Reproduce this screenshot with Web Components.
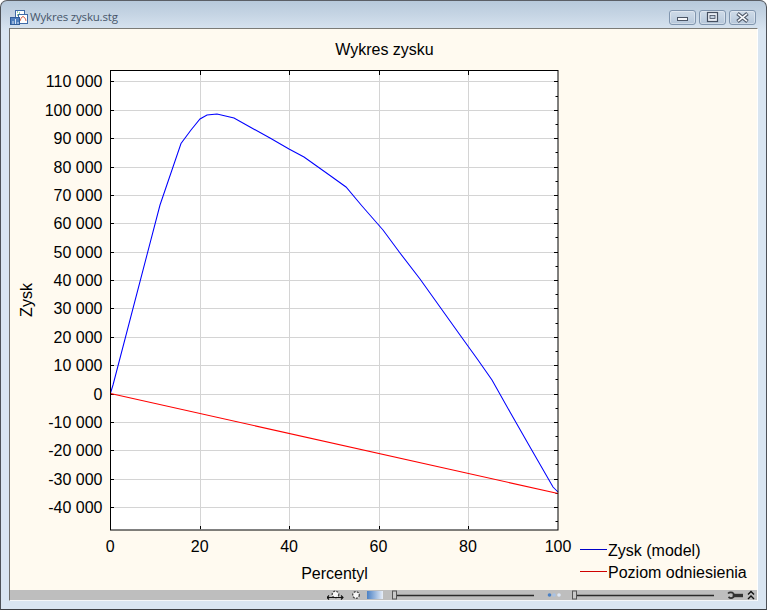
<!DOCTYPE html>
<html lang="pl"><head><meta charset="utf-8"><title>Wykres zysku.stg</title>
<style>html,body{margin:0;padding:0;background:#fff}body{width:767px;height:610px;overflow:hidden}</style>
</head><body>
<app-window caption="Wykres zysku.stg">
  <profit-chart></profit-chart>
  <chart-statusbar></chart-statusbar>
</app-window>
<script>
class CaptionButton extends HTMLElement{
  constructor(){super();const k=this.getAttribute('kind');
    const g={min:'<rect x="8.500" y="7.500" width="10" height="3" fill="#f4f6f9" stroke="#4c5666"/>',
      max:'<rect x="8.500" y="2.500" width="10" height="9" fill="#e9eef5" stroke="#454f60" stroke-width="1.200"/><rect x="11" y="5.500" width="5" height="3" fill="#c3d0df" stroke="#454f60" stroke-width=".8"/>',
      close:'<path d="M8.500 3.500l10 8M18.500 3.500l-10 8" stroke="#4c5666" stroke-width="3.800" fill="none"/><path d="M9 3.800l9 7.400M18 3.800l-9 7.400" stroke="#f6f8fb" stroke-width="1.700" fill="none"/>'}[k];
    this.attachShadow({mode:'open'}).innerHTML=`<style>:host{display:block;width:27px;height:15px;box-sizing:border-box;border:1px solid #8095ae;border-radius:3px;background:linear-gradient(#cfdbe8,#c3d2e2 50%,#b6c7da);box-shadow:inset 0 0 0 1px rgba(255,255,255,.35)}svg{display:block;margin:-1px}</style><svg width="27" height="15" viewBox="0 0 27 15">${g}</svg>`;}
}
customElements.define('caption-button',CaptionButton);

class AppWindow extends HTMLElement{
  constructor(){super();
    this.attachShadow({mode:'open'}).innerHTML=`<style>
    :host{display:block;width:767px;height:610px;box-sizing:border-box;border:1px solid #4d5157;border-bottom-color:#3d4044;border-top-color:#5b5f66;border-radius:7px 7px 0 0;background:linear-gradient(#b7c9db 0,#c6d5e4 14px,#d9e5f1 30px,#d9e5f1 100%);overflow:hidden;padding:0 8px 8px 8px}
    .bar{display:flex;align-items:flex-start;height:27px;box-sizing:border-box;margin-left:-8px;margin-right:-8px;padding:0 8px}
    svg.ic{display:block;margin:8px 0 0 1px;flex:none}
    .t{font:11.500px/15px "Open Sans","Noto Sans",sans-serif;color:#47566a;margin:8px 0 0 2px;flex:1;letter-spacing:-.18px}
    .btns{display:flex;gap:3px;margin:9px 2px 0 0}
    .client{box-sizing:border-box;width:749px;height:573px;border-top:1px solid #7b7b76;border-left:1px solid #6f6f6c;border-bottom:1px solid #f4f6f8;border-right:1px solid #fff;background:#fffaf0}
    </style>
    <div class="bar">
      <svg class="ic" width="18" height="17" viewBox="0 0 18 17">
        <rect x="5.500" y="1.500" width="9" height="9" fill="#fff" stroke="#3f6ba8"/><path d="M7 3h1M9 4h1M7 6h1" stroke="#2f9a4a"/>
        <rect x="8.500" y="5.500" width="9" height="9" fill="#fff" stroke="#3f6ba8"/><path d="M10 12q2-6 4-4t2 4" stroke="#d86a50" fill="none"/>
        <rect x=".5" y="8.500" width="9" height="7" fill="#4f7fbd" stroke="#2f5c99"/><path d="M3 15v-3M5.500 15v-5M8 15v-2" stroke="#d6e4f5"/>
      </svg>
      <div class="t"></div>
      <div class="btns"><caption-button kind="min"></caption-button><caption-button kind="max"></caption-button><caption-button kind="close"></caption-button></div>
    </div>
    <div class="client"><slot></slot></div>`;
    this.shadowRoot.querySelector('.t').textContent=this.getAttribute('caption');}
}
customElements.define('app-window',AppWindow);

class ProfitChart extends HTMLElement{
  constructor(){super();
    const y0=393.5,dx=4.47,x0=110.3;
    const Y=v=>y0-v/10000*28.367;
    const X=p=>x0+p*dx;
    let grid='',ticks='',labels='';
    for(let v=-40000;v<=110000;v+=10000){const y=Math.round(Y(v))+.5;
      grid+=`M111 ${y}H558`;
      ticks+=`M111 ${y}h3M554 ${y}h4`;
      const s=Math.abs(v)>=1000?(v<0?'-':'')+String(Math.floor(Math.abs(v)/1000))+' 000':'0';
      labels+=`<text x="102.500" y="${Math.round(Y(v))+5.5}" text-anchor="end">${s}</text>`;
    }
    for(let v=-45000;v<=105000;v+=10000){const y=Math.round(Y(v))+.5;ticks+=`M555.500 ${y}h2.500`}
    for(let p=0;p<=100;p+=20){const x=Math.round(X(p))+.5;
      if(p>0&&p<100){grid+=`M${x} 71V530`;ticks+=`M${x} 71v4M${x} 529v-3`;}
      labels+=`<text x="${p===100?558:X(p)}" y="552" text-anchor="middle">${p}</text>`;
    }
    const blue='110.500,393 113,385 160,205 181,143.500 191,130 200,119 207,115 217,114 234,118 250,127 270,138 289,149 304,157 330,175.500 346,187 362,206 383,230 400,253 420,279 435,300 460,335 478,360 492,380 510,412 530,447 553,487 558,492';
    this.attachShadow({mode:'open'}).innerHTML=`<style>:host{display:block;width:747px;height:561px}svg{display:block}text{font:16px "Liberation Sans",Arial,sans-serif;fill:#000}</style>
    <svg width="747" height="561" viewBox="10 29 747 561">
      <text x="384.500" y="54.500" text-anchor="middle">Wykres zysku</text>
      <rect x="110.500" y="70.500" width="447.500" height="459.500" fill="#fff"/>
      <path d="${grid}" stroke="#d4d4d4" fill="none"/>
      <path d="${ticks}" stroke="#000" fill="none"/>
      <polyline points="${blue}" fill="none" stroke="#0000ff" stroke-width="1.050"/>
      <path d="M110.500 393.500L558 493.500" stroke="#ff0000" fill="none" stroke-width="1.100"/>
      <rect x="110.500" y="70.500" width="447.500" height="459.500" fill="none" stroke="#000"/>
      ${labels}
      <text x="334.500" y="579" text-anchor="middle">Percentyl</text>
      <text transform="translate(32,300) rotate(-90)" text-anchor="middle">Zysk</text>
      <path d="M580 549.500h27" stroke="#0000c8"/><path d="M580 571.500h27" stroke="#d00000"/>
      <text x="608" y="556">Zysk (model)</text>
      <text x="608" y="577.500">Poziom odniesienia</text>
    </svg>`;}
}
customElements.define('profit-chart',ProfitChart);

class ChartStatusbar extends HTMLElement{
  constructor(){super();
    this.attachShadow({mode:'open'}).innerHTML=`<style>
    :host{display:flex;align-items:center;width:747px;height:10px;background:#bebebe;overflow:hidden}
    svg,.grad{display:block;flex:none}
    .grad{width:16px;height:8px;background:linear-gradient(90deg,#4a80c4,#e8eef8)}
    </style>
    <svg style="margin-left:317px" width="17" height="10" viewBox="0 0 17 10"><circle cx="8.500" cy="4.500" r="3.300" fill="#f6f6f6" stroke="#444" stroke-width="1.300" stroke-dasharray="2 1.200"/><path d="M0 7.500h16M2 5.500l-2 2 2 2M14 5.500l2 2-2 2" stroke="#111" stroke-width="1.100" fill="none"/></svg>
    <svg style="margin-left:7px" width="10" height="10" viewBox="0 0 10 10"><circle cx="5" cy="5" r="3.300" fill="#f6f6f6" stroke="#444" stroke-width="1.300" stroke-dasharray="2 1.200"/></svg>
    <div class="grad" style="margin-left:6px"></div>
    <svg style="margin-left:9px" width="142" height="10" viewBox="0 0 142 10"><path d="M3 5.500h139" stroke="#2a2a2a" stroke-width="1.400"/><rect x=".5" y="1" width="4" height="8" fill="#c9c9c9" stroke="#555"/></svg>
    <svg style="margin-left:13px" width="16" height="10" viewBox="0 0 16 10"><circle cx="2.500" cy="5" r="1.800" fill="#4a80c4"/><circle cx="7" cy="5" r="1.800" fill="#a9c2e3"/><circle cx="12" cy="5" r="1.800" fill="#dde7f5"/></svg>
    <svg style="margin-left:9px" width="142" height="10" viewBox="0 0 142 10"><path d="M3 5.500h139" stroke="#2a2a2a" stroke-width="1.400"/><rect x=".5" y="1" width="4" height="8" fill="#c9c9c9" stroke="#555"/></svg>
    <svg style="margin-left:13px" width="16" height="10" viewBox="0 0 16 10"><path d="M6 5.500h10" stroke="#333" stroke-width="3.400"/><path d="M1 3.500a3.500 3 0 0 1 5.500 0v3.500a3.500 3 0 0 1-5 0" stroke="#333" stroke-width="1.700" fill="none"/></svg>
    <svg style="margin-left:4px" width="8" height="10" viewBox="0 0 8 10"><path d="M1 4.500l3-3 3 3M1 9l3-3 3 3" stroke="#111" stroke-width="1.400" fill="none"/></svg>`;}
}
customElements.define('chart-statusbar',ChartStatusbar);
</script>
</body></html>
